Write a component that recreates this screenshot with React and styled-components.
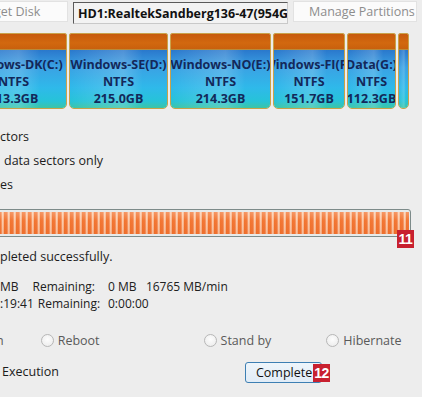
import React from 'react'
import styled, { createGlobalStyle } from 'styled-components';

const Global = createGlobalStyle`
    html, body {
        margin: 0;
        padding: 0;
        background: #ededed;
        overflow: hidden;
    }
    body {
        width: 422px;
        height: 397px;
        font-family: "Open Sans", "Noto Sans", sans-serif;
        font-size: 12px;
        color: #1c1c1c;
    }
`;

const Window = styled.div`
    display: flex;
    flex-direction: column;
    width: 422px;
    height: 397px;
    overflow: hidden;
`;

const TabBar = styled.div`
    display: flex;
    align-items: flex-start;
    gap: 5px;
    margin-top: 1px;
    height: 24px;
    margin-left: -40px;
`;

const Tab = styled.div`
    flex: none;
    box-sizing: border-box;
    width: ${props => props.w}px;
    height: ${props => props.active ? 22 : 21}px;
    margin-top: ${props => props.active ? 1 : 0}px;
    padding-left: ${props => props.pad}px;
    display: flex;
    align-items: center;
    white-space: nowrap;
    overflow: hidden;
    background: ${props => props.active ? '#f3f3f3' : '#fbfbfb'};
    border: 1px solid ${props => props.active ? '#c9c9c9' : '#e2e2e2'};
    border-top-color: ${props => props.active ? '#5a5a5a' : '#e2e2e2'};
    border-left-color: ${props => props.active ? '#5a5a5a' : '#e2e2e2'};
    color: ${props => props.active ? '#111' : '#8d8d8d'};
    font-weight: ${props => props.active ? 700 : 400};
    font-size: 12.5px;
`;

const DiskMap = styled.div`
    display: flex;
    gap: 2px;
    margin-top: 8px;
    height: 76px;
    margin-left: -40px;
`;

const Partition = styled.div`
    flex: none;
    box-sizing: border-box;
    width: ${props => props.w}px;
    display: flex;
    flex-direction: column;
    border: 1px solid #c9a24a;
    border-radius: 2px 2px 5px 5px;
    overflow: hidden;
`;

const PartHead = styled.div`
    height: 15px;
    flex: none;
    background: linear-gradient(180deg, #c75a0c 0%, #d2680f 60%, #c9600d 100%);
    border-bottom: 1px solid #b88a3a;
`;

const PartBody = styled.div`
    flex: 1;
    display: flex;
    flex-direction: column;
    align-items: center;
    justify-content: center;
    padding-top: 4px;
    background:
        linear-gradient(90deg, rgba(255,255,255,0) 0%, rgba(255,255,255,0.18) 55%, rgba(255,255,255,0) 75%),
        linear-gradient(180deg, #2a78cc 0%, #3aa2e4 30%, #2fb9ea 65%, #26c3d8 88%, #3cc4a6 100%);
    color: #13285a;
    font-weight: 700;
    font-size: 12.5px;
    line-height: 17px;
    white-space: nowrap;
`;

const Options = styled.div`
    display: flex;
    flex-direction: column;
    margin-top: 16px;
`;

const OptionLine = styled.div`
    height: ${props => props.h || 24}px;
    line-height: 24px;
    padding-left: ${props => props.indent || 0}px;
    font-size: 12.5px;
`;

const ProgressWrap = styled.div`
    position: relative;
    margin-top: 10px;
    margin-left: -10px;
    width: 421px;
    height: 28px;
    box-sizing: border-box;
    border: 1px solid #7d8b8a;
    border-radius: 3px;
    padding: 2px 1px;
    background: #e6eaea;
`;

const ProgressFill = styled.div`
    height: 100%;
    background:
        linear-gradient(180deg, rgba(255,255,255,0.25) 0%, rgba(255,255,255,0) 40%, rgba(200,60,0,0.12) 100%),
        repeating-linear-gradient(90deg, #f2742e 0px, #f3793a 3px, #f9b48a 4px, #fde3cf 5px, #f58a4c 6px);
`;

const Badge = styled.div`
    position: absolute;
    right: ${props => props.right}px;
    bottom: ${props => props.bottom}px;
    width: 17px;
    height: 18px;
    background: #c8202f;
    color: #fff;
    font-family: "Liberation Sans", Arial, sans-serif;
    font-weight: 700;
    font-size: 14px;
    line-height: 18px;
    text-align: center;
    letter-spacing: -0.5px;
`;

const Status = styled.div`
    margin-top: 12px;
    height: 16px;
    line-height: 16px;
    font-size: 12.5px;
`;

const Stats = styled.div`
    margin-top: 13px;
    display: grid;
    grid-template-columns: 108px auto;
    line-height: 17px;
    font-size: 12px;
    color: #202020;
`;

const StatLead = styled.div`
    display: flex;
    gap: ${props => props.gap}px;
    white-space: nowrap;
`;

const Radios = styled.div`
    display: flex;
    align-items: center;
    margin-top: 20px;
    height: 16px;
    font-size: 12.5px;
    color: #5a5a5a;
`;

const Cut = styled.span`
    margin-left: -4px;
`;

const RadioItem = styled.label`
    display: flex;
    align-items: center;
    gap: 4px;
    margin-left: ${props => props.left}px;
`;

const RadioDot = styled.span`
    width: 11px;
    height: 11px;
    border-radius: 50%;
    border: 1px solid #b7b7b7;
    background: radial-gradient(circle at 50% 40%, #fdfdfd 0%, #e9e9e9 100%);
`;

const BottomRow = styled.div`
    display: flex;
    align-items: center;
    margin-top: 14px;
    height: 21px;
`;

const Label = styled.div`
    padding-left: 2px;
    margin-top: -3px;
    font-size: 12.5px;
    color: #1c1c1c;
`;

const ButtonWrap = styled.div`
    position: relative;
    margin-left: 186px;
`;

const Button = styled.button`
    box-sizing: border-box;
    width: 77px;
    height: 21px;
    border: 1px solid #3d7fb3;
    border-radius: 3px;
    background: linear-gradient(180deg, #eef5fb 0%, #e1ecf6 100%);
    font-family: "Open Sans", "Noto Sans", sans-serif;
    font-size: 12.5px;
    color: #111;
    text-align: left;
    padding: 0 0 0 10px;
`;

const parts = [
    { w: 107, name: 'Windows-DK(C:)', fs: 'NTFS', size: '213.3GB' },
    { w: 99, name: 'Windows-SE(D:)', fs: 'NTFS', size: '215.0GB' },
    { w: 101, name: 'Windows-NO(E:)', fs: 'NTFS', size: '214.3GB' },
    { w: 72, name: 'Windows-FI(F:)', fs: 'NTFS', size: '151.7GB' },
    { w: 49, name: 'Data(G:)', fs: 'NTFS', size: '112.3GB' },
    { w: 11 },
];

const App = () => {
    return (
        <Window>
            <Global />
            <TabBar>
                <Tab w={108} pad={14}>Target Disk</Tab>
                <Tab w={215} pad={4} active>HD1:RealtekSandberg136-47(954GB)</Tab>
                <Tab w={124} pad={15}>Manage Partitions</Tab>
            </TabBar>
            <DiskMap>
                {parts.map((p, i) => (
                    <Partition key={i} w={p.w}>
                        <PartHead />
                        <PartBody>
                            {p.name && <span>{p.name}</span>}
                            {p.fs && <span>{p.fs}</span>}
                            {p.size && <span>{p.size}</span>}
                        </PartBody>
                    </Partition>
                ))}
            </DiskMap>
            <Options>
                <OptionLine>ctors</OptionLine>
                <OptionLine indent={4}>data sectors only</OptionLine>
                <OptionLine h={26}>es</OptionLine>
            </Options>
            <ProgressWrap>
                <ProgressFill />
                <Badge right={-4} bottom={-12}>11</Badge>
            </ProgressWrap>
            <Status>pleted successfully.</Status>
            <Stats>
                <StatLead gap={14}><span>MB</span><span>Remaining:</span></StatLead>
                <span>0 MB&nbsp;&nbsp;&nbsp;16765 MB/min</span>
                <StatLead gap={4}><span>:19:41</span><span>Remaining:</span></StatLead>
                <span>0:00:00</span>
            </Stats>
            <Radios>
                <Cut>n</Cut>
                <RadioItem left={37}><RadioDot />Reboot</RadioItem>
                <RadioItem left={104}><RadioDot />Stand by</RadioItem>
                <RadioItem left={55}><RadioDot />Hibernate</RadioItem>
            </Radios>
            <BottomRow>
                <Label>Execution</Label>
                <ButtonWrap>
                    <Button>Complete</Button>
                    <Badge right={-8} bottom={1}>12</Badge>
                </ButtonWrap>
            </BottomRow>
        </Window>
    )
}

export default App;
